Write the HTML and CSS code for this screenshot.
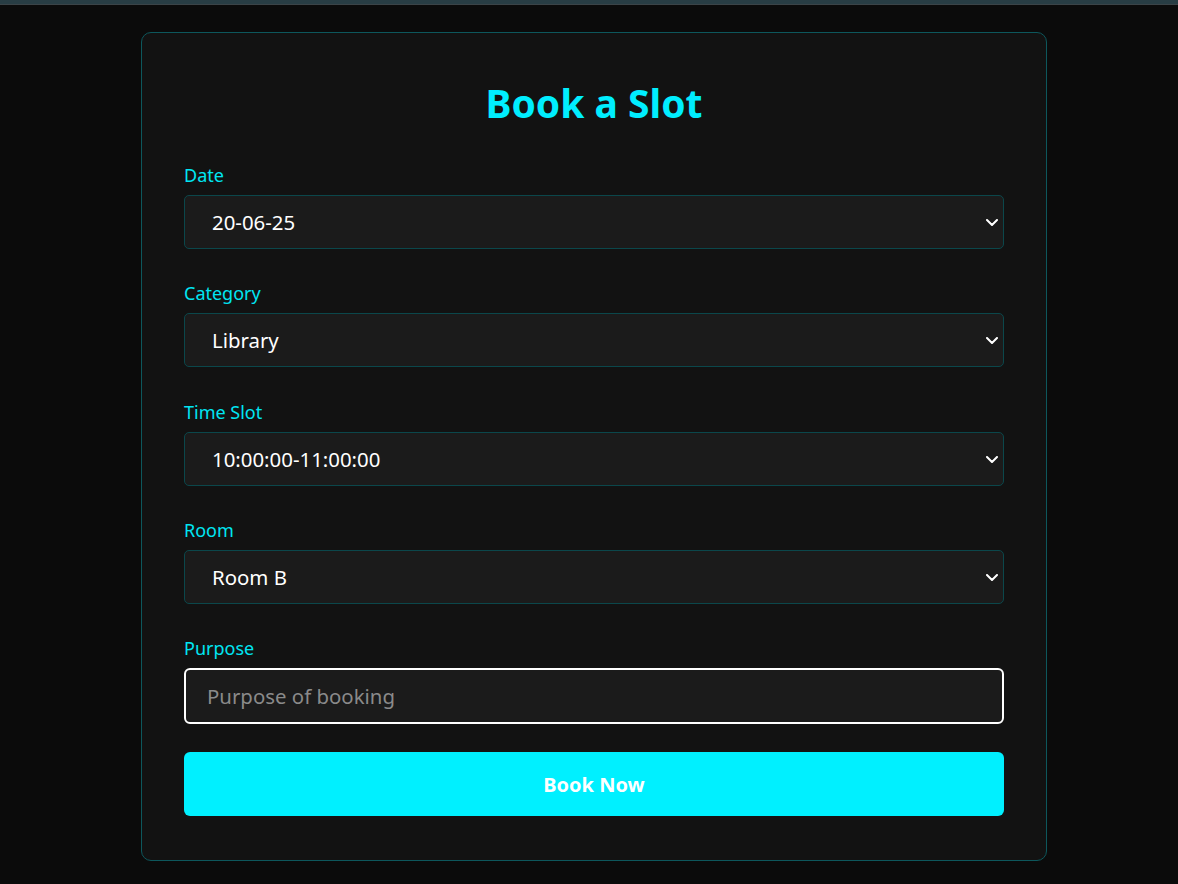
FILE: index.html
```html
<!DOCTYPE html>
<html lang="en">
<head>
<meta charset="utf-8">
<title>Book a Slot</title>
<link rel="stylesheet" href="styles.css">
</head>
<body>
<div class="topbar"></div>
<main class="page">
  <form class="card">
    <h1 class="title">Book a Slot</h1>
    <div class="fields">
      <div class="field">
        <label class="label">Date</label>
        <div class="select-wrap">
          <select class="select"><option>20-06-25</option></select>
          <svg class="chevron" width="12" height="7" viewBox="0 0 12 7"><path d="M1 1l5 5 5-5" fill="none" stroke="#fff" stroke-width="2" stroke-linecap="round" stroke-linejoin="round"/></svg>
        </div>
      </div>
      <div class="field">
        <label class="label">Category</label>
        <div class="select-wrap">
          <select class="select"><option>Library</option></select>
          <svg class="chevron" width="12" height="7" viewBox="0 0 12 7"><path d="M1 1l5 5 5-5" fill="none" stroke="#fff" stroke-width="2" stroke-linecap="round" stroke-linejoin="round"/></svg>
        </div>
      </div>
      <div class="field">
        <label class="label">Time Slot</label>
        <div class="select-wrap">
          <select class="select"><option>10:00:00-11:00:00</option></select>
          <svg class="chevron" width="12" height="7" viewBox="0 0 12 7"><path d="M1 1l5 5 5-5" fill="none" stroke="#fff" stroke-width="2" stroke-linecap="round" stroke-linejoin="round"/></svg>
        </div>
      </div>
      <div class="field">
        <label class="label">Room</label>
        <div class="select-wrap">
          <select class="select"><option>Room B</option></select>
          <svg class="chevron" width="12" height="7" viewBox="0 0 12 7"><path d="M1 1l5 5 5-5" fill="none" stroke="#fff" stroke-width="2" stroke-linecap="round" stroke-linejoin="round"/></svg>
        </div>
      </div>
      <div class="field">
        <label class="label">Purpose</label>
        <input class="input" type="text" placeholder="Purpose of booking">
      </div>
    </div>
    <button class="button" type="button">Book Now</button>
  </form>
</main>
</body>
</html>
```
FILE: styles.css
```css
* { box-sizing: border-box; }
html, body { margin: 0; padding: 0; }
body {
  background: #0b0b0b;
  font-family: "Noto Sans", "Open Sans", sans-serif;
  color: #fff;
  min-height: 884px;
}
.topbar {
  height: 5px;
  background: #283d44;
  border-bottom: 1px solid #3b4448;
}
.page {
  display: flex;
  justify-content: center;
  padding: 27px 0 0 10px;
}
.card {
  width: 906px;
  background: #121212;
  border: 1px solid #0d575c;
  border-radius: 10px;
  padding: 46px 42px 44px 42px;
  display: flex;
  flex-direction: column;
}
.title {
  margin: 0 0 36px;
  text-align: center;
  color: #00eeff;
  font-size: 39px;
  line-height: 48px;
  font-weight: 700;
}
.fields {
  display: flex;
  flex-direction: column;
  gap: 32.3px;
}
.field {
  display: flex;
  flex-direction: column;
  gap: 8px;
}
.label {
  color: #00e6f2;
  font-size: 18px;
  line-height: 24px;
}
.select-wrap {
  position: relative;
}
.select {
  appearance: none;
  -webkit-appearance: none;
  width: 100%;
  height: 54px;
  background: #1b1b1b;
  border: 1px solid #0b474b;
  border-radius: 5px;
  color: #fff;
  font-family: inherit;
  font-size: 20.4px;
  padding: 0 40px 0 27px;
  outline: none;
}
.chevron {
  position: absolute;
  right: 6px;
  top: 24px;
  pointer-events: none;
}
.input {
  width: 100%;
  height: 56px;
  background: #1b1b1b;
  border: 2px solid #fff;
  border-radius: 6px;
  color: #fff;
  font-family: inherit;
  font-size: 20.4px;
  padding: 0 20px 0 21px;
  outline: none;
}
.input::placeholder { color: #8a8a8a; }
.button {
  margin-top: 28px;
  height: 64px;
  border: none;
  border-radius: 6px;
  background: #00f0ff;
  color: #fff;
  font-family: inherit;
  font-size: 20px;
  font-weight: 700;
  cursor: pointer;
}
```
